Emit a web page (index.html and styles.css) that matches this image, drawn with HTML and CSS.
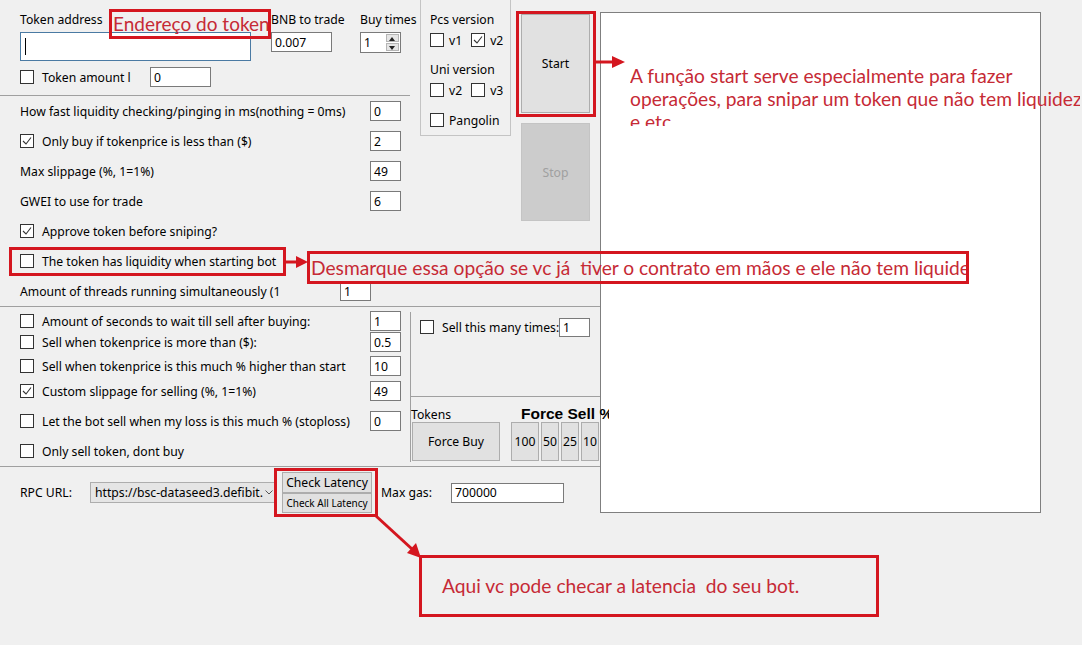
FILE: index.html
```html
<!DOCTYPE html>
<html lang="pt">
<head>
<meta charset="utf-8">
<title>Sniper Bot</title>
<link rel="stylesheet" href="styles.css">
</head>
<body>
<div class="app">
  <div class="form">
    <div class="controls">
      <div class="upper">
        <div class="col-a">
          <section class="sec-token">
            <div class="token-top">
              <div class="fld fld-addr">
                <span class="lbl">Token address</span>
                <div class="tb tb-addr"><span class="caret"></span></div>
              </div>
              <div class="fld fld-bnb">
                <span class="lbl">BNB to trade</span>
                <div class="tb">0.007</div>
              </div>
              <div class="fld fld-buy">
                <span class="lbl">Buy times</span>
                <div class="tb num">1<span class="spin"><i class="up"></i><i class="down"></i></span></div>
              </div>
            </div>
            <div class="token-amt">
              <span class="cb"></span><span class="txt amt-lbl">Token amount l</span><div class="tb tb-amt">0</div>
            </div>
          </section>

          <section class="sec-buy">
            <div class="row"><span class="txt">How fast liquidity checking/pinging in ms(nothing = 0ms)</span><div class="tb sm">0</div></div>
            <div class="row"><span class="cb on"><svg viewBox="0 0 12 12"><polyline points="2,6 5,9 10,2.5"/></svg></span><span class="txt">Only buy if tokenprice is less than ($)</span><div class="tb sm">2</div></div>
            <div class="row"><span class="txt">Max slippage (%, 1=1%)</span><div class="tb sm">49</div></div>
            <div class="row"><span class="txt">GWEI to use for trade</span><div class="tb sm">6</div></div>
            <div class="row"><span class="cb on"><svg viewBox="0 0 12 12"><polyline points="2,6 5,9 10,2.5"/></svg></span><span class="txt">Approve token before sniping?</span></div>
            <div class="row"><span class="cb"></span><span class="txt">The token has liquidity when starting bot</span></div>
            <div class="row row-threads"><span class="txt">Amount of threads running simultaneously (1</span><div class="tb sm">1</div></div>
          </section>

          <section class="sec-sell">
            <div class="srow"><span class="cb"></span><span class="txt">Amount of seconds to wait till sell after buying:</span><div class="tb sm">1</div></div>
            <div class="srow gap1"><span class="cb"></span><span class="txt">Sell when tokenprice is more than ($):</span><div class="tb sm">0.5</div></div>
            <div class="srow gap4"><span class="cb"></span><span class="txt">Sell when tokenprice is this much % higher than start</span><div class="tb sm">10</div></div>
            <div class="srow gap5"><span class="cb on"><svg viewBox="0 0 12 12"><polyline points="2,6 5,9 10,2.5"/></svg></span><span class="txt">Custom slippage for selling (%, 1=1%)</span><div class="tb sm">49</div></div>
            <div class="srow gap10"><span class="cb"></span><span class="txt">Let the bot sell when my loss is this much % (stoploss)</span><div class="tb sm">0</div></div>
            <div class="srow gap10"><span class="cb"></span><span class="txt">Only sell token, dont buy</span></div>
          </section>
        </div>

        <div class="col-b">
          <div class="b-top">
            <div class="grp">
              <span class="glbl">Pcs version</span>
              <div class="opts"><span class="cb"></span><span class="opt">v1</span><span class="cb on"><svg viewBox="0 0 12 12"><polyline points="2,6 5,9 10,2.5"/></svg></span><span class="opt">v2</span></div>
              <span class="glbl glbl-2">Uni version</span>
              <div class="opts"><span class="cb"></span><span class="opt">v2</span><span class="cb"></span><span class="opt">v3</span></div>
              <div class="opts opts-pango"><span class="cb"></span><span class="opt">Pangolin</span></div>
            </div>
            <div class="actions">
              <button class="btn start">Start</button>
              <button class="btn stop" disabled>Stop</button>
            </div>
          </div>
          <div class="b-bottom">
            <div class="sell-panel">
              <div class="sell-times">
                <div class="st-row"><span class="cb"></span><span class="txt st-lbl">Sell this many times:</span><div class="tb xs">1</div></div>
              </div>
              <div class="force">
                <div class="force-head"><span class="tokens">Tokens</span><span class="fs-title">Force Sell %</span></div>
                <div class="force-btns">
                  <button class="btn fbuy">Force Buy</button>
                  <div class="pct">
                    <button class="btn p100">100</button>
                    <button class="btn p">50</button>
                    <button class="btn p">25</button>
                    <button class="btn p">10</button>
                  </div>
                </div>
              </div>
            </div>
          </div>
        </div>
      </div>

      <div class="rpc-row">
        <span class="rpc-lbl">RPC URL:</span>
        <div class="combo"><span class="combo-val">https://bsc-dataseed3.defibit.io</span><svg class="chev" viewBox="0 0 8 5"><polyline points="0.5,0.5 4,4 7.5,0.5"/></svg></div>
        <div class="lat">
          <button class="btn lat1">Check Latency</button>
          <button class="btn lat2">Check All Latency</button>
        </div>
        <span class="gas-lbl">Max gas:</span>
        <div class="tb gas">700000</div>
      </div>
    </div>

    <div class="output"></div>
  </div>

  <!-- callouts -->
  <div class="note note-token"><span class="note-txt">Endereço do token</span></div>
  <div class="note note-start"></div>
  <p class="note-free note-start-text">A função start serve especialmente para fazer<br>operações, para snipar um token que não tem liquidez<br>e etc</p>
  <div class="note note-liq"></div>
  <div class="note note-uncheck"><span class="note-txt">Desmarque essa opção se vc já  tiver o contrato em mãos e ele não tem liquidez</span></div>
  <div class="note note-lat"></div>
  <div class="note note-here"><span class="note-txt">Aqui vc pode checar a latencia  do seu bot.</span></div>

  <svg class="arrows" width="1082" height="645" viewBox="0 0 1082 645">
    <line x1="596" y1="62" x2="614" y2="62"/>
    <polygon points="612,56 625,62 612,68"/>
    <line x1="285" y1="262" x2="298" y2="262"/>
    <polygon points="296,256 308,262 296,268"/>
    <line x1="376" y1="516" x2="412" y2="549"/>
    <polygon points="407,553 421,558 416,543"/>
  </svg>
</div>
</body>
</html>
```

FILE: styles.css
```css
* { box-sizing: border-box; }
html, body { margin: 0; padding: 0; }
body {
  background: #f0f0f0;
  font-family: "Noto Sans", "Segoe UI", sans-serif;
  font-size: 12.2px;
  color: #000;
}

.app {
  position: relative;
  width: 1082px;
  height: 645px;
  overflow: hidden;
  background: #f0f0f0;
}

.form { display: flex; align-items: flex-start; }
.controls { width: 600px; display: flex; flex-direction: column; }
.upper { display: flex; height: 467px; border-bottom: 1px solid #a0a0a0; }
.col-a { width: 410px; display: flex; flex-direction: column; }
.col-b { width: 190px; display: flex; flex-direction: column; }

/* generic controls */
.txt { white-space: nowrap; }
.tb {
  display: flex;
  align-items: center;
  height: 20px;
  background: #fff;
  border: 1px solid #7a7a7a;
  padding: 0 3px;
  white-space: nowrap;
  overflow: hidden;
  flex: none;
}
.tb.sm { width: 31px; }
.tb.xs { width: 31px; height: 19px; }
.cb {
  width: 14px;
  height: 14px;
  border: 1px solid #333;
  background: #fff;
  flex: none;
  display: flex;
}
.cb svg { width: 12px; height: 12px; }
.cb svg polyline { fill: none; stroke: #333; stroke-width: 1.1; }
.cb + .txt { margin-left: 8px; }

.btn {
  font: inherit;
  color: #000;
  background: #e1e1e1;
  border: 1px solid #adadad;
  padding: 0;
  margin: 0;
  white-space: nowrap;
  overflow: hidden;
}

/* token section */
.sec-token {
  height: 96px;
  border-bottom: 1px solid #a0a0a0;
  padding: 12px 0 0 20px;
}
.token-top { display: flex; align-items: flex-start; }
.fld { display: flex; flex-direction: column; gap: 4px; flex: none; }
.lbl { height: 16px; line-height: 16px; white-space: nowrap; }
.fld-addr { width: 231px; }
.tb-addr { height: 29px; border-color: #4a7aa3; padding-left: 4px; }
.caret { width: 1px; height: 17px; background: #000; }
.fld-bnb { margin-left: 20px; width: 61px; }
.fld-buy { margin-left: 28px; width: 41px; }
.num { position: relative; height: 21px; }
.spin {
  position: absolute;
  right: 1px;
  top: 1px;
  width: 13px;
  height: 17px;
  display: flex;
  flex-direction: column;
  gap: 1px;
}
.spin i {
  flex: 1;
  background: #e5e5e5;
  border: 1px solid #b5b5b5;
  position: relative;
}
.spin i::after {
  content: "";
  position: absolute;
  left: 2px;
  border-left: 3.5px solid transparent;
  border-right: 3.5px solid transparent;
}
.spin .up::after { top: 1.5px; border-bottom: 4px solid #222; }
.spin .down::after { top: 1.5px; border-top: 4px solid #222; }

.token-amt { display: flex; align-items: center; height: 20px; margin-top: 6px; }
.amt-lbl { width: 108px; }
.tb-amt { width: 61px; }

/* buy section */
.sec-buy { height: 211px; border-bottom: 1px solid #a0a0a0; }
.row {
  height: 30px;
  display: flex;
  align-items: center;
  padding: 0 9px 0 20px;
}
.row .txt, .srow .txt { flex: 1; }
.row-threads { padding-right: 39px; }

/* sell section */
.sec-sell { flex: 1; padding-top: 4px; }
.srow {
  height: 20px;
  display: flex;
  align-items: center;
  padding: 0 9px 0 20px;
}
.gap1 { margin-top: 1px; }
.gap4 { margin-top: 4px; }
.gap5 { margin-top: 5px; }
.gap10 { margin-top: 10px; }

/* version group + start/stop */
.b-top {
  height: 307px;
  border-bottom: 1px solid #a0a0a0;
  display: flex;
  align-items: flex-start;
  padding-left: 10px;
}
.grp {
  width: 91px;
  height: 136px;
  border: 1px solid #c4c4c4;
  border-top: none;
  padding: 12px 0 0 9px;
  display: flex;
  flex-direction: column;
  flex: none;
}
.glbl { height: 16px; line-height: 16px; white-space: nowrap; }
.glbl-2 { margin-top: 14px; }
.opts { display: flex; align-items: center; height: 16px; margin-top: 4px; }
.opts .cb { margin-right: 5px; }
.opt { margin-right: 9px; }
.opts-pango { margin-top: 14px; }

.actions { margin-left: 10px; display: flex; flex-direction: column; }
.start { width: 69px; height: 99px; margin-top: 14px; }
.stop {
  width: 69px;
  height: 98px;
  margin-top: 10px;
  background: #cccccc;
  border-color: #c4c4c4;
  color: #a0a0a0;
}

.b-bottom { flex: 1; padding-top: 5px; }
.sell-panel {
  height: 150px;
  border-left: 1px solid #a0a0a0;
  display: flex;
  flex-direction: column;
}
.sell-times {
  height: 85px;
  border-bottom: 1px solid #a0a0a0;
  padding: 5px 0 0 9px;
}
.st-row { display: flex; align-items: center; height: 20px; }
.st-lbl { width: 117px; flex: none; }
.force { flex: 1; }
.force-head {
  display: flex;
  align-items: baseline;
  height: 25px;
  padding-top: 9px;
}
.tokens { width: 110px; flex: none; line-height: 16px; }
/* the title label runs past the panel edge, over the log box */
.fs-title {
  position: relative;
  z-index: 1;
  flex: none;
  width: 88px;
  overflow: hidden;
  white-space: nowrap;
  font-family: "Liberation Sans", Arial, sans-serif;
  font-weight: bold;
  font-size: 15.5px;
  line-height: 16px;
}
.force-btns { display: flex; height: 39px; }
.fbuy { width: 88px; margin-left: 1px; flex: none; }
.pct { display: flex; gap: 2px; margin-left: 11px; flex: none; }
.pct .btn { width: 18px; flex: none; }
.pct .p100 { width: 28px; }

/* rpc row */
.rpc-row {
  display: flex;
  align-items: center;
  padding: 5px 0 0 20px;
}
.rpc-lbl { width: 70px; white-space: nowrap; flex: none; }
.combo {
  width: 187px;
  height: 21px;
  background: #e5e5e5;
  border: 1px solid #adadad;
  display: flex;
  align-items: center;
  padding: 0 4px;
  flex: none;
}
.combo-val { width: 168px; overflow: hidden; white-space: nowrap; flex: none; }
.chev {
  width: 8px;
  height: 5px;
  margin-left: 2px;
  flex: none;
}
.chev polyline { fill: none; stroke: #555; stroke-width: 1; }
.lat { display: flex; flex-direction: column; margin-left: 5px; width: 90px; flex: none; }
.lat1 { height: 21px; }
.lat2 { height: 20px; font-size: 10px; }
.gas-lbl { margin-left: 9px; width: 70px; white-space: nowrap; flex: none; }
.gas { width: 113px; }

/* log output */
.output {
  width: 441px;
  height: 501px;
  margin-top: 12px;
  background: #fff;
  border: 1px solid #7f7f7f;
  flex: none;
}

/* callouts drawn on top of the form */
.note {
  position: absolute;
  border: 3px solid #d4161f;
  overflow: hidden;
}
.note-txt, .note-free {
  font-family: Lato, "Open Sans", sans-serif;
  color: #c62a35;
  white-space: pre;
  font-size: 19.2px;
}
.note-token { left: 109px; top: 9px; width: 162px; height: 30px; }
.note-token .note-txt {
  display: block;
  font-size: 19px;
  line-height: 24px;
  padding-left: 1px;
}
.note-start { left: 516px; top: 11px; width: 80px; height: 106px; }
.note-free {
  position: absolute;
  margin: 0;
  left: 630px;
  top: 64px;
  width: 450px;
  height: 62px;
  overflow: hidden;
  line-height: 23px;
}
.note-liq { left: 9px; top: 247px; width: 277px; height: 29px; }
.note-uncheck { left: 307px; top: 251px; width: 662px; height: 33px; }
.note-uncheck .note-txt {
  display: block;
  line-height: 27px;
  padding-left: 1px;
}
.note-lat { left: 274px; top: 468px; width: 104px; height: 49px; }
.note-here { left: 419px; top: 555px; width: 460px; height: 62px; }
.note-here .note-txt {
  display: block;
  line-height: 56px;
  padding-left: 20px;
}

.arrows {
  position: absolute;
  left: 0;
  top: 0;
  pointer-events: none;
}
.arrows line { stroke: #d4161f; stroke-width: 3; }
.arrows polygon { fill: #d4161f; }
```
